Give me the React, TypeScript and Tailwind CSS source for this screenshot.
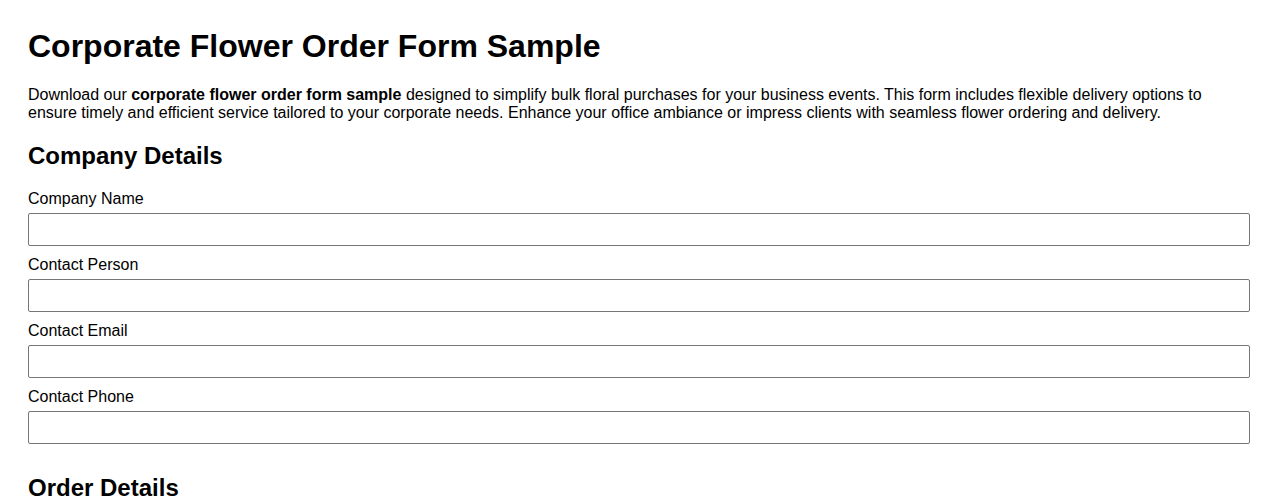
import React from 'react';

const fields = ['Company Name', 'Contact Person', 'Contact Email', 'Contact Phone'];

export default function App() {
  return (
    <div className="bg-white text-black px-[28px] pt-[28px] font-['Liberation_Sans',Arial,sans-serif]">
      <h1 className="text-[32px] font-bold leading-[37px]">Corporate Flower Order Form Sample</h1>
      <p className="mt-[21px] text-[16px] leading-[18px]">
        Download our <strong>corporate flower order form sample</strong> designed to simplify bulk floral purchases for your business events. This form includes flexible delivery options to ensure timely and efficient service tailored to your corporate needs. Enhance your office ambiance or impress clients with seamless flower ordering and delivery.
      </p>

      <section className="mt-[20px] mb-[30px]">
        <h2 className="text-[24px] font-bold leading-[28px]">Company Details</h2>
        <div className="mt-[20px]">
          {fields.map((label) => (
            <div key={label}>
              <label className="block text-[16px] leading-[18px] mb-[5px]">{label}</label>
              <input
                type="text"
                className="block w-full h-[33px] border border-[#767676] rounded-[2px] mb-[10px] px-2 text-[16px]"
              />
            </div>
          ))}
        </div>
      </section>

      <section>
        <h2 className="text-[24px] font-bold leading-[28px]">Order Details</h2>
      </section>
    </div>
  );
}
